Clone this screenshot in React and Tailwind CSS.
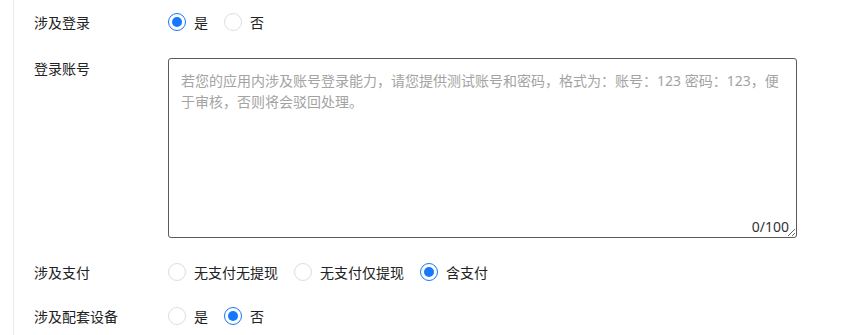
import React from "react";

const font = { fontFamily: '"Noto Sans", "Noto Sans CJK SC", sans-serif' };

function Radio({ checked, label }) {
  return (
    <label className="flex items-center gap-[8px] cursor-pointer">
      <span
        className={
          "flex items-center justify-center w-[18px] h-[18px] rounded-full border bg-white " +
          (checked ? "border-[#1677ff]" : "border-[#dedede]")
        }
      >
        {checked && <span className="w-[10px] h-[10px] rounded-full bg-[#1677ff]" />}
      </span>
      <span className="text-[14px] text-[#222]">{label}</span>
    </label>
  );
}

function Row({ label, children }) {
  return (
    <div className="flex items-center h-[44px]">
      <div className="w-[134px] text-[14px] text-[#222]">{label}</div>
      <div className="flex items-center gap-[16px]">{children}</div>
    </div>
  );
}

export default function App() {
  return (
    <div className="w-[867px] h-[335px] bg-white overflow-hidden" style={font}>
      <div className="ml-[13px] h-full border-l border-[#ececec] pl-[20px]">
        <Row label="涉及登录">
          <Radio checked label="是" />
          <Radio label="否" />
        </Row>
        <div className="flex mt-[14px]">
          <div className="w-[134px] text-[14px] leading-[22px] text-[#222]">登录账号</div>
          <div className="relative w-[629px] h-[180px]">
            <textarea
              className="block w-full h-full border border-[#5a5a5a] rounded-[3px] px-[12px] pt-[11px] text-[14px] leading-[21px] text-[#333] placeholder:text-[#a3a3a3] outline-none resize"
              style={font}
              placeholder="若您的应用内涉及账号登录能力，请您提供测试账号和密码，格式为：账号：123 密码：123，便于审核，否则将会驳回处理。"
            />
            <span className="absolute right-[8px] bottom-[1px] text-[14px] text-[#333] leading-[20px]">0/100</span>
          </div>
        </div>
        <div className="mt-[12px]">
          <Row label="涉及支付">
            <Radio label="无支付无提现" />
            <Radio label="无支付仅提现" />
            <Radio checked label="含支付" />
          </Row>
        </div>
        <Row label="涉及配套设备">
          <Radio label="是" />
          <Radio checked label="否" />
        </Row>
      </div>
    </div>
  );
}
